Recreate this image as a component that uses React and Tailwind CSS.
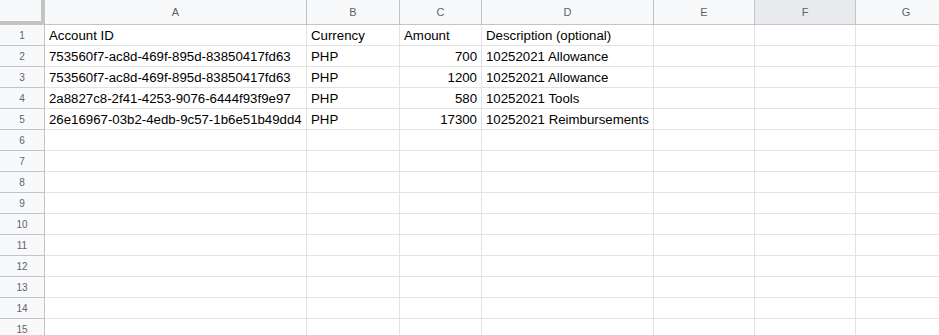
const cols = ['A', 'B', 'C', 'D', 'E', 'F', 'G'];

const rows = [
  ['Account ID', 'Currency', 'Amount', 'Description (optional)'],
  ['753560f7-ac8d-469f-895d-83850417fd63', 'PHP', '700', '10252021 Allowance'],
  ['753560f7-ac8d-469f-895d-83850417fd63', 'PHP', '1200', '10252021 Allowance'],
  ['2a8827c8-2f41-4253-9076-6444f93f9e97', 'PHP', '580', '10252021 Tools'],
  ['26e16967-03b2-4edb-9c57-1b6e51b49dd4', 'PHP', '17300', '10252021 Reimbursements'],
];

function Cell({ value, numeric }) {
  return (
    <div
      className={`h-[21px] border-r border-b border-[#e2e3e3] bg-white flex items-end pb-[2px] pl-[4px] pr-[4px] text-[13.25px] leading-[15px] text-black whitespace-nowrap overflow-hidden ${
        numeric ? 'justify-end' : 'justify-start'
      }`}
    >
      {value}
    </div>
  );
}

export default function App() {
  const body = Array.from({ length: 15 }, (_, i) => rows[i] || []);

  return (
    <div className="w-[939px] h-[335px] overflow-hidden bg-white font-['Liberation_Sans',Arial,sans-serif]">
      <div className="grid grid-cols-[45px_262px_93px_82px_172px_101px_101px_101px] w-max">
        {/* corner with freeze handles */}
        <div className="h-[25px] bg-[#f8f9fa] border-r-4 border-b-4 border-[#c4c4c4]" />
        {cols.map((c) => (
          <div
            key={c}
            className={`h-[25px] border-r border-b border-[#c4c4c4] flex items-center justify-center text-[11px] text-[#5f6368] ${
              c === 'F' ? 'bg-[#e8eaed]' : 'bg-[#f8f9fa]'
            }`}
          >
            {c}
          </div>
        ))}

        {body.map((r, i) => (
          <div key={i} className="contents">
            <div className="h-[21px] bg-[#f8f9fa] border-r border-b border-[#c4c4c4] flex items-center justify-center text-[10px] text-[#5f6368]">
              {i + 1}
            </div>
            {cols.map((c, j) => (
              <Cell key={c} value={r[j] || ''} numeric={i > 0 && j === 2} />
            ))}
          </div>
        ))}
      </div>
    </div>
  );
}
